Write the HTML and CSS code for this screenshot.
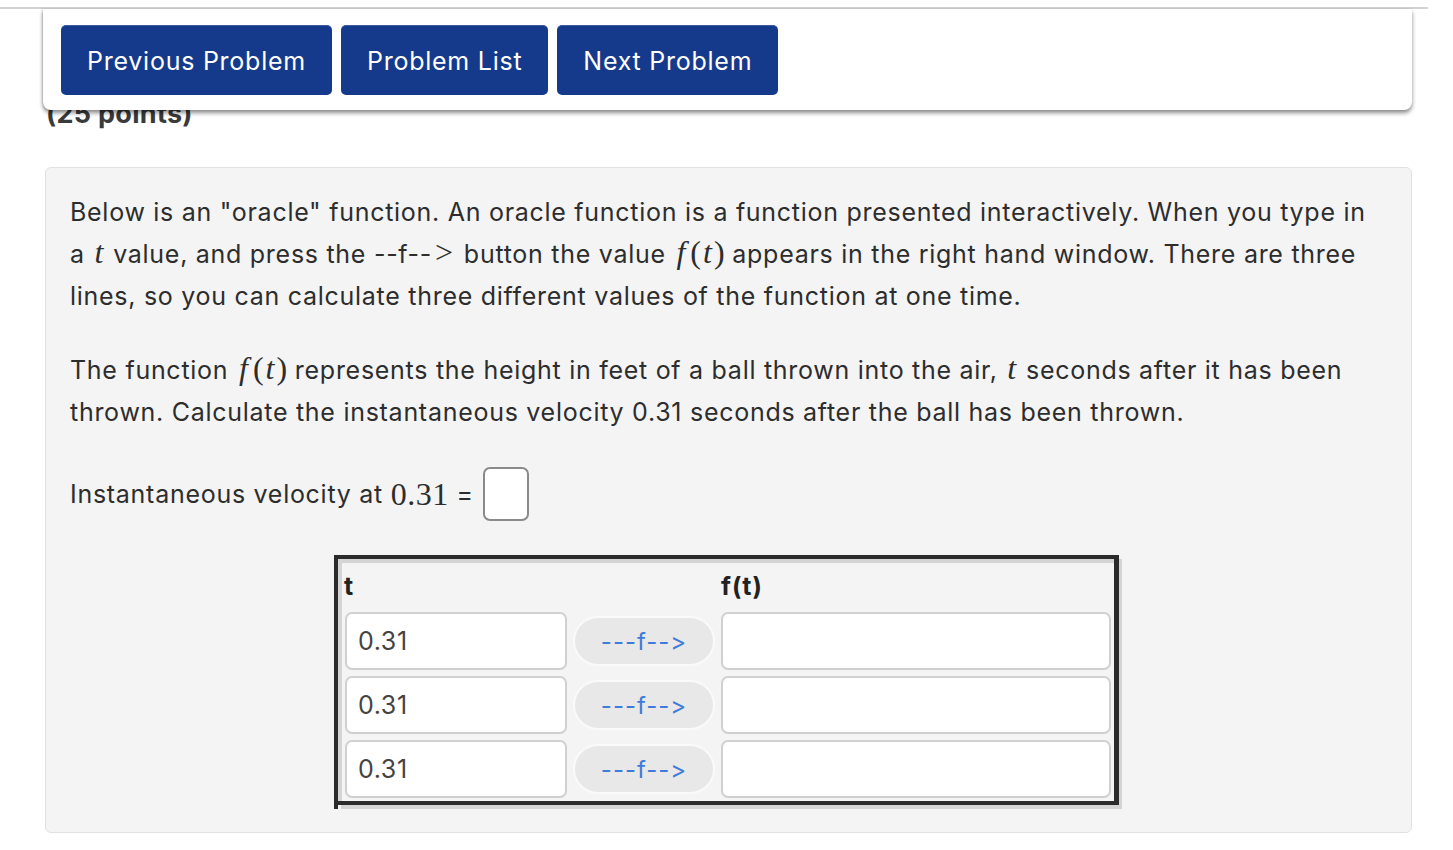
FILE: index.html
```html
<!DOCTYPE html>
<html lang="en">
<head>
<meta charset="utf-8">
<title>Problem</title>
<link rel="stylesheet" href="styles.css">
</head>
<body>
<div class="topline"></div>
<nav class="navbar">
  <a class="navbtn">Previous Problem</a>
  <a class="navbtn">Problem List</a>
  <a class="navbtn">Next Problem</a>
</nav>
<main class="main">
  <h3 class="points">(25 points)</h3>
  <section class="problem">
    <p>Below is an "oracle" function. An oracle function is a function presented interactively. When you type in a <span class="mi">t</span> value, and press the --f--<span class="mo gt">&gt;</span> button the value <span class="mi mf">f</span><span class="mo">(</span><span class="mi">t</span><span class="mo">)</span> appears in the right hand window. There are three lines, so you can calculate three different values of the function at one time.</p>
    <p>The function <span class="mi mf">f</span><span class="mo">(</span><span class="mi">t</span><span class="mo">)</span> represents the height in feet of a ball thrown into the air, <span class="mi">t</span> seconds after it has been thrown. Calculate the instantaneous velocity 0.31 seconds after the ball has been thrown.</p>
    <div class="answer">Instantaneous velocity at&nbsp;<span class="mn">0.31</span>&nbsp;=&nbsp;<span class="ansbox"></span></div>
    <div class="oracle">
      <div class="oracle-inner">
        <table class="otable">
          <tr><th class="th-t">t</th><th></th><th class="th-f">f(t)</th></tr>
          <tr><td><input class="tin" value="0.31"></td><td><button class="fbtn">---f--&gt;</button></td><td><input class="fout"></td></tr>
          <tr><td><input class="tin" value="0.31"></td><td><button class="fbtn">---f--&gt;</button></td><td><input class="fout"></td></tr>
          <tr><td><input class="tin" value="0.31"></td><td><button class="fbtn">---f--&gt;</button></td><td><input class="fout"></td></tr>
        </table>
      </div>
    </div>
  </section>
</main>
</body>
</html>
```

FILE: styles.css
```css
html, body {
  margin: 0;
  padding: 0;
  background: #ffffff;
}
body {
  font-family: Inter, "Noto Sans", "Liberation Sans", sans-serif;
  font-feature-settings: "calt" 0, "liga" 0;
  font-variant-ligatures: none;
  color: #2d2d2d;
  position: relative;
  width: 1453px;
  height: 850px;
  overflow: hidden;
}
.topline {
  margin-top: 7px;
  width: 1428px;
  height: 2px;
  background: #d2d2d2;
}
.navbar {
  position: absolute;
  top: 9px;
  left: 43px;
  width: 1369px;
  height: 101px;
  box-sizing: border-box;
  padding: 16px 0 0 18px;
  background: #ffffff;
  border-radius: 0 0 8px 8px;
  box-shadow: 0 3px 4px rgba(0,0,0,0.45), -1px 0 2px rgba(0,0,0,0.12);
  display: flex;
  gap: 9px;
  align-items: flex-start;
  z-index: 5;
}
.navbtn {
  display: flex;
  align-items: center;
  height: 70px;
  box-sizing: border-box;
  padding: 0 26px;
  background: #153a8b;
  border-top: 1px solid #3d5aa0;
  border-radius: 5px;
  color: #ffffff;
  font-size: 25px;
  letter-spacing: 0.75px;
}
.main {
  margin-left: 45px;
  width: 1367px;
}
.points {
  margin: 90px 0 0 1px;
  font-size: 27px;
  line-height: 30px;
  font-weight: 700;
  letter-spacing: 0.3px;
  color: #3a3a3a;
}
.problem {
  margin-top: 38px;
  box-sizing: border-box;
  width: 1367px;
  background: #f4f4f4;
  border: 1px solid #e2e2e2;
  border-radius: 6px;
  padding: 23px 24px 23px 24px;
}
.problem p {
  margin: 0 0 32px 0;
  font-size: 25px;
  line-height: 42px;
  letter-spacing: 0.72px;
}
.mi {
  font-family: "Liberation Serif", "DejaVu Serif", serif;
  font-style: italic;
  font-size: 32px;
  line-height: 1;
  letter-spacing: 0;
  padding: 0 2px;
}
.mf {
  padding: 0 5px 0 3px;
}
.mo, .mn {
  font-family: "Liberation Serif", "DejaVu Serif", serif;
  font-size: 32px;
  line-height: 1;
  letter-spacing: 0;
}
.gt {
  padding: 0 3px;
}
.answer {
  display: flex;
  align-items: center;
  height: 58px;
  font-size: 25px;
  letter-spacing: 0.72px;
}
.mn {
  letter-spacing: 0.5px;
}
.ansbox {
  display: inline-block;
  width: 46px;
  height: 54px;
  box-sizing: border-box;
  border: 2px solid #8a8a8a;
  border-radius: 7px;
  background: #ffffff;
  margin-left: 2px;
}
.oracle {
  margin: 32px 0 0 264px;
  display: inline-block;
  vertical-align: top;
  border-left: 4px solid #2b2b2b;
  padding-bottom: 4px;
}
.oracle-inner {
  border-top: 4px solid #2b2b2b;
  border-right: 5px solid #2b2b2b;
  border-bottom: 4px solid #2b2b2b;
  padding: 4px 0 0 4px;
  box-shadow: inset 4px 4px 0 #d4d4d4, 3px 4px 0 #d4d4d4;
}
.otable {
  border-collapse: collapse;
  border-spacing: 0;
}
.otable th {
  height: 46px;
  padding: 0;
  text-align: left;
  font-size: 25px;
  font-weight: 700;
  letter-spacing: 1px;
  color: #222;
}
.th-t { padding-left: 2px !important; }
.th-f { padding-left: 3px !important; }
.otable td {
  padding: 3px;
  vertical-align: middle;
}
.tin, .fout {
  display: block;
  height: 58px;
  box-sizing: border-box;
  border: 2px solid #d0d0d0;
  border-radius: 7px;
  background: #ffffff;
  font-family: Inter, "Noto Sans", "Liberation Sans", sans-serif;
  font-size: 25px;
  letter-spacing: 0.6px;
  color: #444;
  padding: 0 0 0 11px;
  outline: none;
}
.tin { width: 222px; }
.fout { width: 390px; }
.fbtn {
  display: block;
  width: 142px;
  height: 50px;
  box-sizing: border-box;
  border: 2px solid #fafafa;
  border-radius: 25px;
  background: #e8e8e8;
  color: #3f7bdb;
  font-family: Inter, "Noto Sans", "Liberation Sans", sans-serif;
  font-feature-settings: "calt" 0, "liga" 0;
  font-variant-ligatures: none;
  font-size: 24px;
  letter-spacing: 1px;
  padding: 0;
}
```
